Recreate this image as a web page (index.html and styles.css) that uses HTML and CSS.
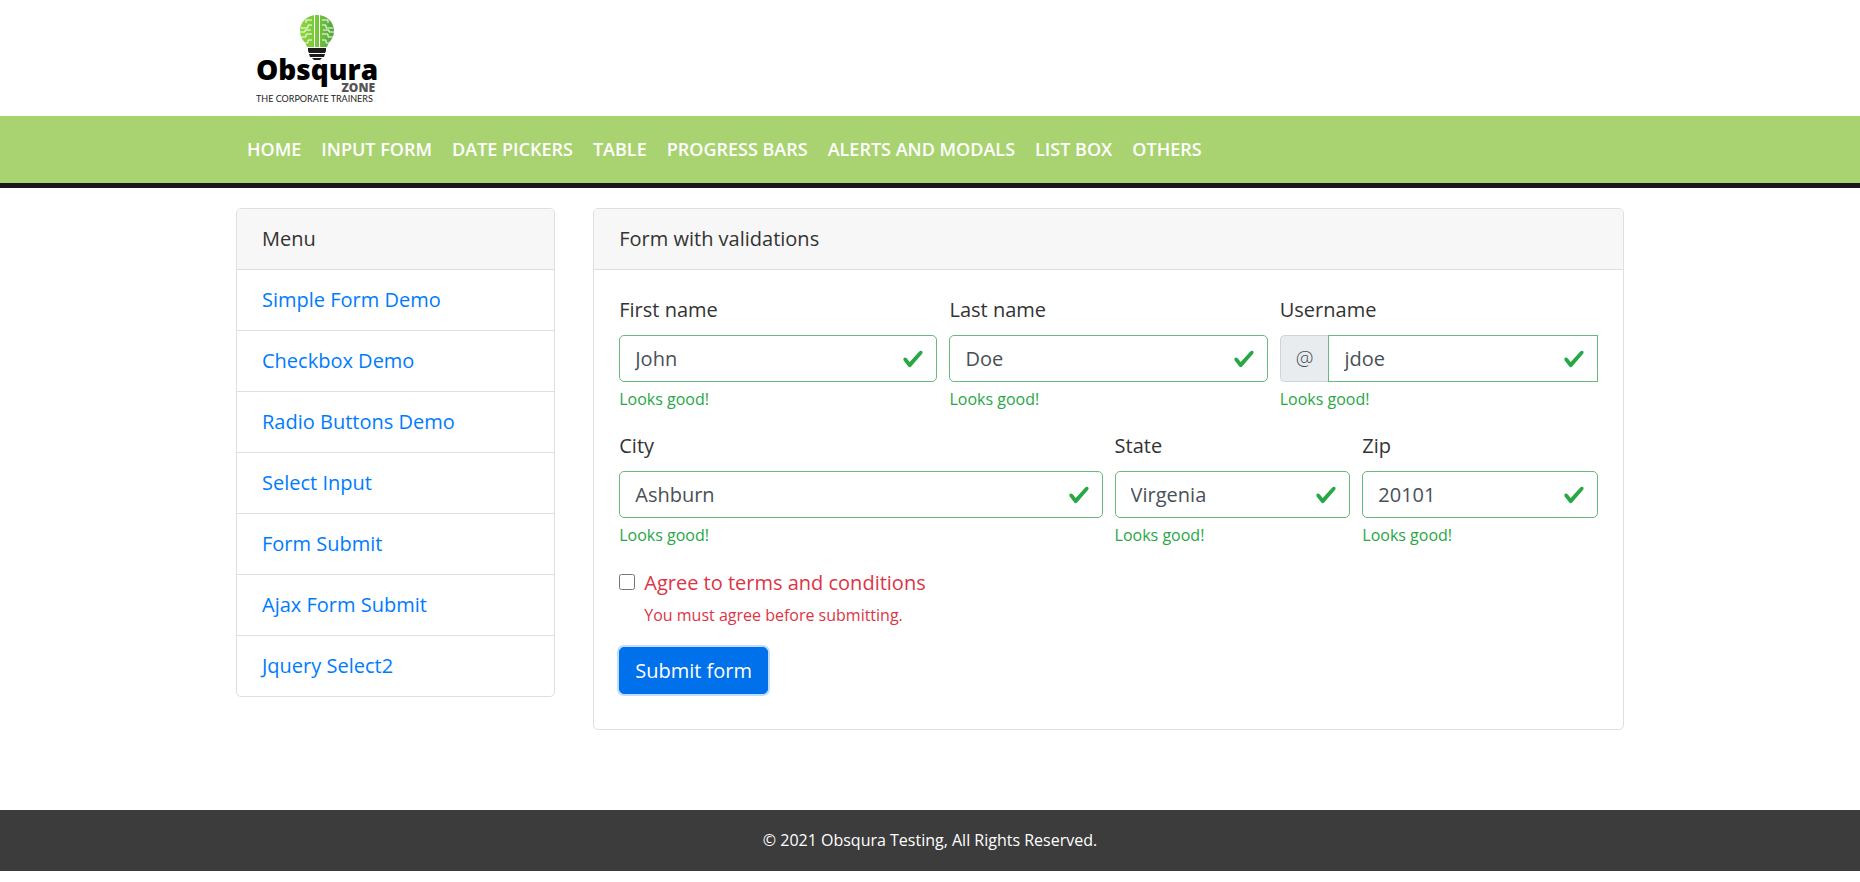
FILE: index.html
```html
<!DOCTYPE html>
<html lang="en">
<head>
<meta charset="utf-8">
<title>Obsqura Testing</title>
<link rel="stylesheet" href="styles.css">
</head>
<body>
<header class="site-header">
  <div class="container">
    <a class="logo" href="#" aria-label="Obsqura Zone">
      <svg width="124" height="92" viewBox="0 0 124 92">
        <defs>
          <linearGradient id="leaf" x1="0" y1="0" x2="1" y2="0">
            <stop offset="0" stop-color="#8cd636"/>
            <stop offset=".5" stop-color="#78c83c"/>
            <stop offset="1" stop-color="#4fa63a"/>
          </linearGradient>
        </defs>
        <path fill="url(#leaf)" d="M61 1C51 1 44 8 44 17c0 6 3 9 5 12 1 2 2 3 2 4h20c0-1 1-2 2-4 2-3 5-6 5-12C78 8 71 1 61 1z"/>
        <g fill="none" stroke="#fff" stroke-width="1">
          <path d="M58.500 1v32M63.500 1v32"/>
          <path d="M56 6h-6v3M56 11h-4v3h-7M44 18h5v-2h6M56 20h-6v3h-5M56 26h-4v3h-4"/>
          <path d="M66 6h6v3M66 11h4v3h7M78 18h-5v-2h-6M66 20h6v3h5M66 26h4v3h4"/>
        </g>
        <path fill="#1b1b1b" d="M52 34h18v3l-1 2H53l-1-2zM53 40h16l-1 3H54zM56 44h10l-2 2h-6z"/>
        <text class="logo-name" x="0" y="66">Obsqura</text>
        <text class="logo-zone" x="119" y="78" text-anchor="end">ZONE</text>
        <text class="logo-tag" x="0" y="88">THE CORPORATE TRAINERS</text>
      </svg>
    </a>
  </div>
</header>
<nav class="site-nav">
  <div class="container nav-links">
    <a href="#">HOME</a>
    <a href="#">INPUT FORM</a>
    <a href="#">DATE PICKERS</a>
    <a href="#">TABLE</a>
    <a href="#">PROGRESS BARS</a>
    <a href="#">ALERTS AND MODALS</a>
    <a href="#">LIST BOX</a>
    <a href="#">OTHERS</a>
  </div>
</nav>
<main class="container layout">
  <aside class="card">
    <div class="card-header">Menu</div>
    <ul class="menu">
      <li><a href="#">Simple Form Demo</a></li>
      <li><a href="#">Checkbox Demo</a></li>
      <li><a href="#">Radio Buttons Demo</a></li>
      <li><a href="#">Select Input</a></li>
      <li><a href="#">Form Submit</a></li>
      <li><a href="#">Ajax Form Submit</a></li>
      <li><a href="#">Jquery Select2</a></li>
    </ul>
  </aside>
  <section class="card">
    <div class="card-header">Form with validations</div>
    <form class="card-body">
      <div class="form-row">
        <div class="field third">
          <label for="first">First name</label>
          <input class="control" id="first" type="text" value="John">
          <div class="valid">Looks good!</div>
        </div>
        <div class="field third">
          <label for="last">Last name</label>
          <input class="control" id="last" type="text" value="Doe">
          <div class="valid">Looks good!</div>
        </div>
        <div class="field third">
          <label for="user">Username</label>
          <div class="input-group">
            <span class="addon">@</span>
            <input class="control" id="user" type="text" value="jdoe">
          </div>
          <div class="valid">Looks good!</div>
        </div>
      </div>
      <div class="form-row">
        <div class="field half">
          <label for="city">City</label>
          <input class="control" id="city" type="text" value="Ashburn">
          <div class="valid">Looks good!</div>
        </div>
        <div class="field quarter">
          <label for="state">State</label>
          <input class="control" id="state" type="text" value="Virgenia">
          <div class="valid">Looks good!</div>
        </div>
        <div class="field quarter">
          <label for="zip">Zip</label>
          <input class="control" id="zip" type="text" value="20101">
          <div class="valid">Looks good!</div>
        </div>
      </div>
      <div class="agree">
        <input class="tick" type="checkbox" id="terms">
        <div>
          <label for="terms">Agree to terms and conditions</label>
          <div class="invalid">You must agree before submitting.</div>
        </div>
      </div>
      <button class="submit" type="button">Submit form</button>
    </form>
  </section>
</main>
<footer class="site-footer">© 2021 Obsqura Testing, All Rights Reserved.</footer>
</body>
</html>
```
FILE: styles.css
```css
*, *::before, *::after { box-sizing: border-box; }

body {
  margin: 0;
  background: #fff;
  color: #333;
  font: 400 20px/30px "Open Sans", sans-serif;
}

a { color: #007bff; text-decoration: none; }

.container {
  max-width: 1426px;
  margin: 0 auto;
  padding: 0 19px;
}

.site-header { padding: 14px 0 10px; }
.logo { display: block; margin-left: 20px; }
.logo svg { display: block; overflow: visible; }
.logo-name { font: 800 28px "Open Sans", sans-serif; fill: #000; }
.logo-zone { font: 800 12px "Open Sans", sans-serif; fill: #555; }
.logo-tag { font: 400 9px Lato, sans-serif; fill: #222; }

.site-nav {
  background: #a9d371;
  border-bottom: 5px solid #17171c;
}
.nav-links { display: flex; flex-wrap: wrap; padding: 18px 20px; }
.nav-links a {
  padding: 0 10px;
  color: #fff;
  font-size: 18px;
  font-weight: 600;
  line-height: 31px;
}

.layout {
  display: grid;
  grid-template-columns: 23% minmax(0, 1fr);
  gap: 38px;
  align-items: start;
  margin-top: 20px;
}

.card {
  border: 1px solid #dfdfdf;
  border-radius: 5px;
  background: #fff;
  overflow: hidden;
}
.card-header {
  padding: 15px 25px;
  background: #f7f7f7;
  border-bottom: 1px solid #dfdfdf;
}
.card-body { padding: 25px 25px 35px; }

.menu { margin: 0; padding: 0; list-style: none; }
.menu li { padding: 15px 25px; }
.menu li + li { border-top: 1px solid #dfdfdf; }

.form-row {
  display: grid;
  grid-template-columns: repeat(12, minmax(0, 1fr));
  column-gap: 12px;
  margin-bottom: 20px;
}
.form-row + .form-row { margin-bottom: 21px; }
.third { grid-column: span 4; }
.half { grid-column: span 6; }
.quarter { grid-column: span 3; }
.field label { display: block; margin-bottom: 10px; }

.control {
  display: block;
  width: 100%;
  height: 47px;
  padding: 0 48px 0 15px;
  border: 1px solid #67b97d;
  border-radius: 5px;
  color: #495057;
  font: inherit;
  background: #fff url("data:image/svg+xml,%3csvg xmlns='http://www.w3.org/2000/svg' viewBox='0 0 8 8'%3e%3cpath fill='%2328a745' d='M2.3 6.73L.6 4.53c-.4-1.04.46-1.4 1.1-.8l1.1 1.4 3.4-3.8c.6-.63 1.6-.27 1.2.7l-4 4.6c-.43.5-.8.4-1.1.1z'/%3e%3c/svg%3e") no-repeat right 12px center / 22px 22px;
}
.input-group { display: flex; }
.input-group .control { flex: 1; min-width: 0; border-radius: 0; }
.addon {
  display: flex;
  align-items: center;
  padding: 0 15px;
  border: 1px solid #ced4da;
  border-right: 0;
  border-radius: 5px 0 0 5px;
  background: #e9ecef;
  color: #495057;
  font-weight: 300;
}

.valid, .invalid { margin-top: 5px; font-size: 16px; line-height: 24px; }
.valid { color: #28a745; }
.invalid, .agree label { color: #dc3545; }

.agree {
  display: flex;
  align-items: flex-start;
  gap: 9px;
  margin-bottom: 20px;
}
.agree label { display: block; }
.tick { flex: none; width: 16px; height: 16px; margin: 6px 0 0; }

.submit {
  height: 47px;
  padding: 0 15px;
  border: 1px solid #0071ea;
  border-radius: 5px;
  background: #0071ea;
  box-shadow: 0 0 0 2px rgba(0, 123, 255, .25);
  color: #fff;
  font: 400 20px/30px "Open Sans", sans-serif;
}

.site-footer {
  margin-top: 80px;
  padding: 18px;
  background: #3c3c3c;
  color: #fff;
  font-size: 16px;
  font-weight: 400;
  line-height: 25px;
  text-align: center;
}
```
